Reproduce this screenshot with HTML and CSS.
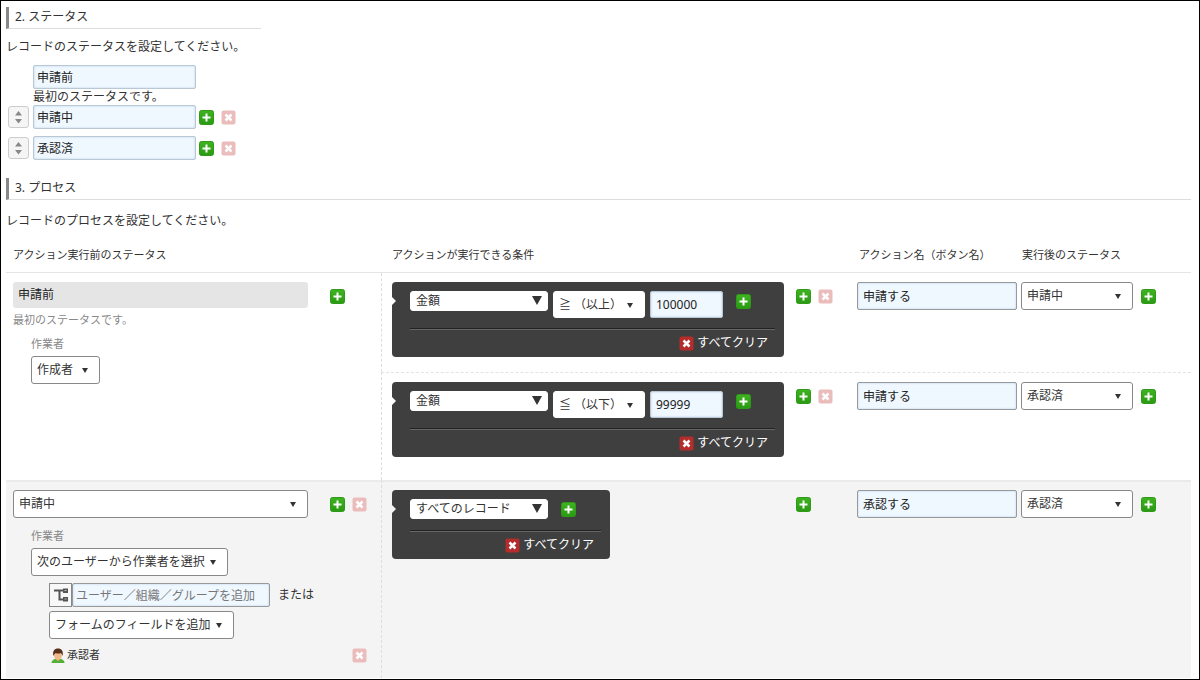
FILE: index.html
```html
<!DOCTYPE html>
<html lang="ja">
<head>
<meta charset="utf-8">
<title>プロセス管理の設定</title>
<link rel="stylesheet" href="styles.css">
</head>
<body>
<svg class="defs" aria-hidden="true">
  <defs>
    <linearGradient id="green" x1="0" y1="0" x2="0" y2="1"><stop offset="0" stop-color="#3fb321"/><stop offset="1" stop-color="#2a9a12"/></linearGradient>
    <symbol id="add" viewBox="0 0 15 15"><rect x=".5" y=".5" width="14" height="14" rx="2" fill="url(#green)" stroke="#2f9a18"/><path d="M7.500 3.500v8M3.500 7.500h8" stroke="#fff" stroke-width="2"/></symbol>
    <symbol id="del" viewBox="0 0 15 15"><rect x=".5" y=".5" width="14" height="14" rx="2" fill="currentColor"/><path d="M4.500 4.500l6 6M10.500 4.500l-6 6" stroke="#fff" stroke-width="2.500"/></symbol>
    <symbol id="sort" viewBox="0 0 19 20"><path d="M6 8.500h7l-3.500-4.500zM6 12h7l-3.500 4.500z" fill="#888"/></symbol>
  </defs>
</svg>
<main class="page">
  <section class="statuses">
    <h2 class="heading heading-short">2. ステータス</h2>
    <p class="lead">レコードのステータスを設定してください。</p>
    <ul class="status-list">
      <li class="status-first">
        <input class="text status-name" aria-label="最初のステータス" value="申請前">
        <span class="note">最初のステータスです。</span>
      </li>
      <li class="status-row">
        <button class="sort" aria-label="並べ替え"><svg><use href="#sort"/></svg></button>
        <input class="text status-name" aria-label="ステータス2" value="申請中">
        <span class="pair"><button class="icon" aria-label="追加"><svg><use href="#add"/></svg></button><button class="icon faded" aria-label="削除"><svg><use href="#del"/></svg></button></span>
      </li>
      <li class="status-row">
        <button class="sort" aria-label="並べ替え"><svg><use href="#sort"/></svg></button>
        <input class="text status-name" aria-label="ステータス3" value="承認済">
        <span class="pair"><button class="icon" aria-label="追加"><svg><use href="#add"/></svg></button><button class="icon faded" aria-label="削除"><svg><use href="#del"/></svg></button></span>
      </li>
    </ul>
  </section>

  <section class="processes">
    <h2 class="heading">3. プロセス</h2>
    <p class="lead">レコードのプロセスを設定してください。</p>
    <table class="process">
      <colgroup><col class="col-status"><col class="col-cond"><col class="col-name"><col></colgroup>
      <thead>
        <tr>
          <th class="th-status">アクション実行前のステータス</th>
          <th class="th-cond">アクションが実行できる条件</th>
          <th class="th-name">アクション名（ボタン名）</th>
          <th class="th-next">実行後のステータス</th>
        </tr>
      </thead>
      <tbody>
        <tr>
          <td class="before" rowspan="2">
            <div class="line">
              <div class="fixed-status">申請前</div>
              <span class="pair"><button class="icon" aria-label="追加"><svg><use href="#add"/></svg></button></span>
            </div>
            <p class="hint">最初のステータスです。</p>
            <div class="assignee">
              <label class="caption" for="worker1">作業者</label>
              <span class="sel w-owner"><select id="worker1"><option>作成者</option></select></span>
            </div>
          </td>
          <td class="cond">
            <div class="line">
              <div class="filter">
                <div class="fields">
                  <span class="sel plain"><select aria-label="フィールド"><option>金額</option></select></span>
                  <span class="sel op"><select aria-label="演算子"><option>≧ （以上）</option></select></span>
                  <input class="text amount" aria-label="値" value="100000">
                  <button class="icon" aria-label="条件を追加"><svg><use href="#add"/></svg></button>
                </div>
                <button class="clear"><svg><use href="#del"/></svg><span>すべてクリア</span></button>
              </div>
              <span class="pair"><button class="icon" aria-label="追加"><svg><use href="#add"/></svg></button><button class="icon faded" aria-label="削除"><svg><use href="#del"/></svg></button></span>
            </div>
          </td>
          <td><input class="text action" aria-label="アクション名" value="申請する"></td>
          <td><div class="next"><span class="sel w-next"><select aria-label="実行後のステータス"><option>申請中</option></select></span><button class="icon" aria-label="追加"><svg><use href="#add"/></svg></button></div></td>
        </tr>
        <tr class="sub">
          <td class="cond">
            <div class="line">
              <div class="filter">
                <div class="fields">
                  <span class="sel plain"><select aria-label="フィールド"><option>金額</option></select></span>
                  <span class="sel op"><select aria-label="演算子"><option>≦ （以下）</option></select></span>
                  <input class="text amount" aria-label="値" value="99999">
                  <button class="icon" aria-label="条件を追加"><svg><use href="#add"/></svg></button>
                </div>
                <button class="clear"><svg><use href="#del"/></svg><span>すべてクリア</span></button>
              </div>
              <span class="pair"><button class="icon" aria-label="追加"><svg><use href="#add"/></svg></button><button class="icon faded" aria-label="削除"><svg><use href="#del"/></svg></button></span>
            </div>
          </td>
          <td><input class="text action" aria-label="アクション名" value="申請する"></td>
          <td><div class="next"><span class="sel w-next"><select aria-label="実行後のステータス"><option>承認済</option></select></span><button class="icon" aria-label="追加"><svg><use href="#add"/></svg></button></div></td>
        </tr>
      </tbody>
      <tbody class="shaded">
        <tr>
          <td class="before">
            <div class="line">
              <span class="sel w-status"><select aria-label="実行前のステータス"><option>申請中</option></select></span>
              <span class="pair"><button class="icon" aria-label="追加"><svg><use href="#add"/></svg></button><button class="icon faded" aria-label="削除"><svg><use href="#del"/></svg></button></span>
            </div>
            <div class="assignee spaced">
              <label class="caption" for="worker2">作業者</label>
              <span class="sel w-select"><select id="worker2"><option>次のユーザーから作業者を選択</option></select></span>
              <div class="members">
                <div class="adder">
                  <button class="org" aria-label="組織から選択"><svg viewBox="0 0 16 16"><path d="M1 3.500h10M6.500 3.500v9h5" fill="none" stroke="#555" stroke-width="2"/><path d="M10 1.500h5v4.500h-5zM10 10h5v4.500h-5z" fill="#555"/><path d="M11.500 3.500h2M11.500 12h2" stroke="#bbb"/></svg></button>
                  <input class="text member" aria-label="ユーザーを追加" placeholder="ユーザー／組織／グループを追加">
                  <span class="or">または</span>
                </div>
                <span class="sel w-form"><select aria-label="フィールドを追加"><option>フォームのフィールドを追加</option></select></span>
                <div class="person">
                  <svg class="avatar" viewBox="0 0 14 15"><path d="M.5 15c0-2.500 2-3.800 4-4h5c2 .2 4 1.500 4 4z" fill="#52b038"/><path d="M4.500 10.500h5L7 13.500z" fill="#e0a06b"/><ellipse cx="7" cy="7.500" rx="3.800" ry="4.300" fill="#efb98a"/><path d="M2.500 8C1.200 3 3.500.5 7 .5S12.800 3 11.500 8C11 7 10.800 6 10 5 8 6 6 5.500 4.500 5 3.500 6 3 7 2.500 8z" fill="#59301a"/></svg>
                  <span class="person-name">承認者</span>
                  <button class="icon faded" aria-label="承認者を削除"><svg><use href="#del"/></svg></button>
                </div>
              </div>
            </div>
          </td>
          <td class="cond">
            <div class="line">
              <div class="filter-slot">
                <div class="filter">
                  <div class="fields">
                    <span class="sel plain"><select aria-label="フィールド"><option>すべてのレコード</option></select></span>
                    <button class="icon" aria-label="条件を追加"><svg><use href="#add"/></svg></button>
                  </div>
                  <button class="clear"><svg><use href="#del"/></svg><span>すべてクリア</span></button>
                </div>
              </div>
              <span class="pair"><button class="icon" aria-label="追加"><svg><use href="#add"/></svg></button></span>
            </div>
          </td>
          <td><input class="text action" aria-label="アクション名" value="承認する"></td>
          <td><div class="next"><span class="sel w-next"><select aria-label="実行後のステータス"><option>承認済</option></select></span><button class="icon" aria-label="追加"><svg><use href="#add"/></svg></button></div></td>
        </tr>
      </tbody>
    </table>
  </section>
</main>
</body>
</html>
```
FILE: styles.css
```css
* { box-sizing: border-box; }
body {
  margin: 0;
  color: #333;
  background: #fff;
  font: 12px/18px "Noto Sans", "Noto Sans CJK JP", sans-serif;
}
.defs { position: absolute; width: 0; height: 0; }
.page {
  min-height: 100vh;
  padding: 6px 8px 0 5px;
  border: 1px solid #000;
}
input, select, button { font: inherit; color: inherit; }
button { padding: 0; border: 0; background: none; cursor: pointer; }
p, ul { margin: 0; padding: 0; list-style: none; }

.heading {
  margin: 0;
  height: 22px;
  padding-left: 6px;
  border-left: 3px solid #888;
  border-bottom: 1px solid #ddd;
  font-size: 12px;
  font-weight: 400;
  line-height: 20px;
}
.heading-short { width: 255px; }
.lead { margin-top: 9px; }

.text {
  padding: 0 3px;
  border: 1px solid #b9c8d3;
  border-radius: 2px;
  background: #f0f8ff;
  box-shadow: inset 0 0 2px #a9c9e4;
  color: #222;
}
.icon { flex: none; display: block; width: 15px; height: 15px; }
.icon svg { display: block; width: 15px; height: 15px; }
.faded { color: #ebbcbc; }
.pair { display: flex; gap: 7px; }

.status-list { margin-top: 9px; }
.status-first { display: flex; flex-direction: column; align-items: flex-start; padding-left: 27px; }
.status-name { width: 163px; height: 24px; }
.note { line-height: 16px; }
.status-row { display: flex; align-items: center; height: 24px; padding-left: 2px; }
.status-row + .status-row { margin-top: 7px; }
.sort { width: 21px; height: 22px; border: 1px solid #ccc; border-radius: 3px; background: #f5f5f5; }
.sort svg { display: block; width: 19px; height: 20px; }
.status-row .status-name { margin: 0 3px 0 4px; }

.processes { margin-top: 18px; }
.processes .lead { margin-top: 12px; }
.process { width: 100%; margin-top: 6px; border-spacing: 0; table-layout: fixed; }
.col-status { width: 375px; }
.col-cond { width: 476px; }
.col-name { width: 164px; }
.process th {
  height: 37px;
  padding: 2px 0 0;
  border-bottom: 1px solid #e5e5e5;
  font-size: 11px;
  font-weight: 400;
  text-align: left;
}
.process .th-status { padding-left: 7px; }
.process .th-cond { padding-left: 11px; }
.process .th-name { padding-left: 2px; }
.process .th-next { padding-left: 1px; }
.process td { height: 99px; padding: 9px 0 0; vertical-align: top; }
.process .before { padding-left: 7px; }
.process .cond { padding-left: 10px; border-left: 1px dashed #ddd; }
.process .sub td { height: 108px; border-top: 1px dashed #e3e3e3; }
.shaded td { border-top: 2px solid #eaeaea; background: #f4f4f4; }
.process .shaded td { height: 198px; padding-top: 8px; }

.line { display: flex; align-items: flex-start; }
.line > .pair { margin-top: 7px; }
.before .line > .pair { margin-left: 22px; }
.cond .line > .pair { margin-left: 12px; }
.fixed-status { width: 295px; height: 26px; padding-left: 5px; border-radius: 3px; background: #e5e5e5; color: #222; line-height: 26px; }
.hint { margin-top: 3px; color: #888; font-size: 11px; }
.assignee { display: flex; flex-direction: column; align-items: flex-start; padding-left: 18px; margin-top: 6px; }
.spaced { margin-top: 9px; }
.caption { margin-bottom: 3px; color: #888; font-size: 11px; }

.sel { position: relative; display: block; height: 28px; }
.sel select {
  display: block;
  width: 100%;
  height: 100%;
  padding: 0 4px 0 5px;
  border: 1px solid #888;
  border-radius: 3px;
  background: #fff;
  color: #333;
  appearance: none;
}
.sel::after {
  position: absolute;
  top: 50%;
  right: 12px;
  margin-top: -2px;
  border: 3px solid transparent;
  border-top: 5px solid #333;
  border-bottom: 0;
  content: "";
  pointer-events: none;
}
.w-owner { width: 69px; }
.w-status { width: 295px; }
.w-select { width: 197px; }
.w-form { width: 185px; }
.w-next { width: 112px; }

.filter {
  position: relative;
  width: 392px;
  padding: 9px 9px 5px 18px;
  border-radius: 4px;
  background: #3f3f3f;
  color: #fff;
}
.filter::before {
  position: absolute;
  top: 15px;
  left: 0;
  border: 4px solid transparent;
  border-left-color: #fff;
  border-right: 0;
  content: "";
}
.shaded .filter { width: 218px; }
.shaded .filter::before { border-left-color: #f4f4f4; }
.filter-slot { width: 392px; }
.fields { display: flex; align-items: flex-start; gap: 5px; padding-bottom: 10px; border-bottom: 1px solid #222; }
.shaded .fields { padding-bottom: 11px; }
.fields .icon { margin: 3px 0 0 8px; }
.filter select { border-color: #fff; }
.plain { width: 138px; height: 20px; }
.plain::after { right: 6px; margin-top: -5px; border-width: 9px 5px 0; }
.op { width: 92px; height: 27px; }
.amount { width: 73px; height: 27px; padding-left: 5px; }
.clear {
  display: flex;
  align-items: center;
  justify-content: flex-end;
  gap: 3px;
  width: 100%;
  padding: 4px 7px 0 0;
  border-top: 1px solid #666;
  color: #fff;
}
.clear svg { width: 15px; height: 15px; color: #b52c2c; }

.action { display: block; width: 160px; height: 28px; padding: 0 5px; border-color: #999; }
.next { display: flex; align-items: center; gap: 8px; }

.members { width: 100%; padding: 7px 0 0 18px; }
.adder { display: flex; align-items: center; margin-bottom: 4px; }
.org { width: 23px; height: 24px; border: 1px solid #888; background: #f8f8f8; }
.org svg { display: block; width: 16px; height: 16px; margin: auto; }
.member { width: 198px; height: 24px; border-color: #999; }
.member::placeholder { color: #777; opacity: 1; }
.or { margin-left: 8px; }
.person { display: flex; align-items: center; margin-top: 7px; padding: 0 14px 0 2px; }
.avatar { width: 14px; height: 15px; margin-right: 2px; }
.person-name { flex: 1; font-size: 11px; }
```
